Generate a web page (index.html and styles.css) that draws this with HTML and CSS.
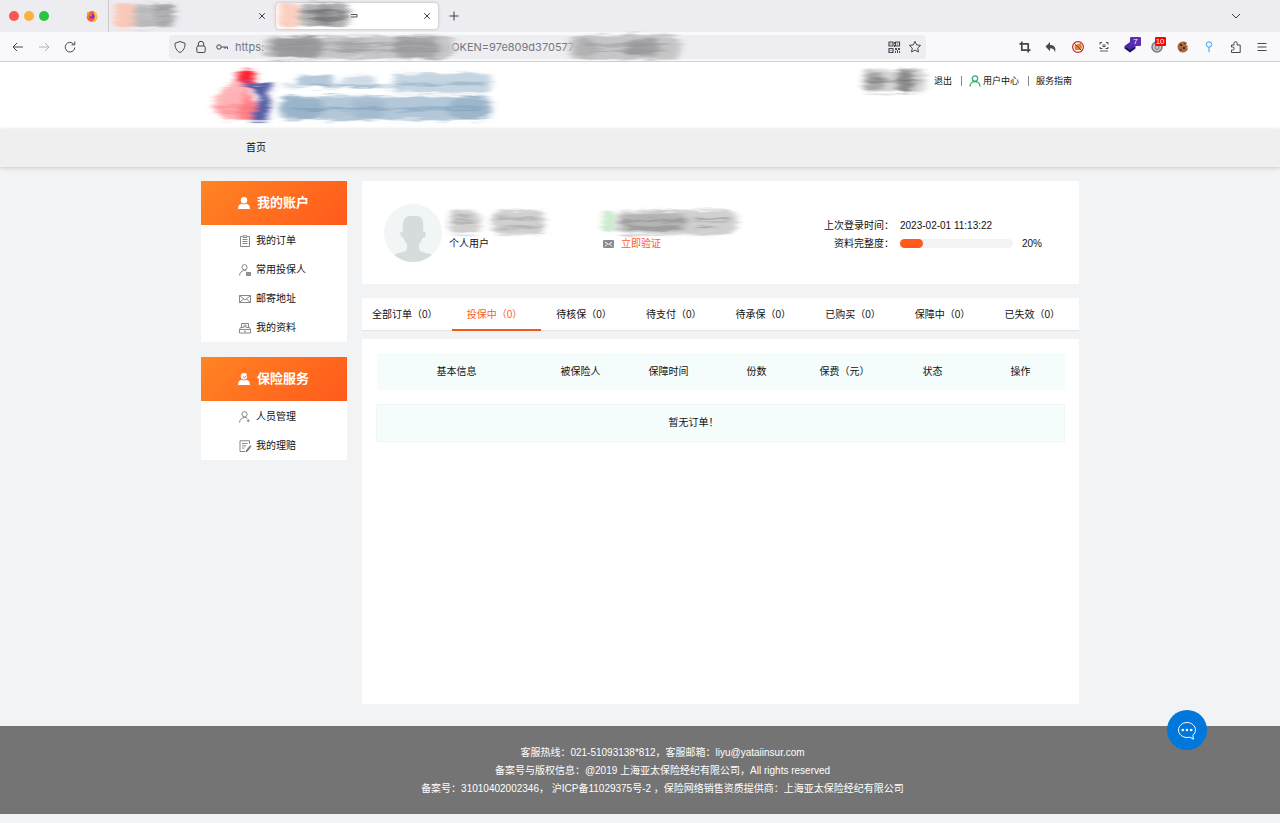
FILE: index.html
```html
<!DOCTYPE html>
<html lang="zh-CN">
<head>
<meta charset="utf-8">
<meta name="viewport" content="width=device-width, initial-scale=1">
<title>用户中心</title>
<link rel="stylesheet" href="styles.css">
</head>
<body>
<svg class="defs" aria-hidden="true">
  <defs>
    <filter id="smear" x="-15%" y="-15%" width="130%" height="130%">
      <feTurbulence type="fractalNoise" baseFrequency="0.04 0.3" numOctaves="2" seed="4" result="n"/>
      <feGaussianBlur in="SourceGraphic" stdDeviation="3 1.2" result="s"/>
      <feDisplacementMap in="s" in2="n" scale="8" xChannelSelector="R" yChannelSelector="G" result="d"/>
      <feGaussianBlur in="d" stdDeviation="1.5 0.4"/>
    </filter>
  </defs>
</svg>

<div class="tabstrip">
  <div class="lights"><i class="light red"></i><i class="light amber"></i><i class="light green"></i></div>
  <svg class="fox" viewBox="0 0 12 12"><circle cx="6" cy="6.400" r="5.300" fill="#ff5a3c"/><path d="M8 1c2.600 1.200 3.800 4 3.100 6.600C10.400 10.200 8 11.700 5.500 11.500 9 10.500 9.500 6 8 4z" fill="#ffc52e"/><path d="M1 4c0-1 .5-2 1-2.500C2.200 2.500 3 3 4 3.200 2.500 4.500 2 6 3 8 1.500 7.500.700 6 1 4z" fill="#ff9a1f"/><circle cx="6" cy="6.300" r="2.500" fill="#7a35d8"/><path d="M3.500 4.500c1.500-.8 2.500 0 3 .8-1 0-1.500.7-1.300 1.300-1 0-1.800-.9-1.700-2.100z" fill="#ff8b1c"/></svg>
  <div class="tab first">
    <svg class="tab-smudge" viewBox="0 0 84 32"><g filter="url(#smear)"><rect x="5" y="3" width="20" height="25" rx="5" fill="#f9c8b8"/><rect x="25" y="4" width="40" height="24" rx="5" fill="#b9b9bb"/><rect x="45" y="5" width="20" height="18" rx="5" fill="#a2a2a4"/><path d="M20 14h42M24 19h36" stroke="#d4d4d6" stroke-width="1"/></g></svg>
    <button class="icon-btn" aria-label="关闭标签"><svg viewBox="0 0 8 8"><path d="M1.200 1.200l5.600 5.600M6.800 1.200L1.200 6.800"/></svg></button>
  </div>
  <div class="tab active">
    <svg class="tab-smudge" viewBox="0 0 84 32"><g filter="url(#smear)"><rect x="2" y="3" width="21" height="25" rx="4" fill="#fbd0c2"/><rect x="23" y="3" width="51" height="24" rx="9" fill="#b0b0b2"/><rect x="38" y="6" width="20" height="18" rx="6" fill="#8e8e90"/><path d="M28 12q26-4 44 3M30 19q24 3 40-2" stroke="#666668" stroke-width="2" fill="none"/></g><path d="M75 14.500h6v2.500h-6" stroke="#555" fill="none"/></svg>
    <button class="icon-btn" aria-label="关闭标签"><svg viewBox="0 0 8 8"><path d="M1.200 1.200l5.600 5.600M6.800 1.200L1.200 6.800"/></svg></button>
  </div>
  <button class="icon-btn plus" aria-label="新建标签"><svg viewBox="0 0 10 10"><path d="M5 .5v9M.5 5h9"/></svg></button>
  <button class="icon-btn chevron" aria-label="标签列表"><svg viewBox="0 0 10 10"><path d="M1 3l4 4 4-4"/></svg></button>
</div>

<div class="toolbar">
  <div class="nav-tools">
    <button class="tool" aria-label="后退"><svg viewBox="0 0 16 16"><path d="M13 8H3M7 4L3 8l4 4"/></svg></button>
    <button class="tool faded" aria-label="前进"><svg viewBox="0 0 16 16"><path d="M3 8h10M9 4l4 4-4 4"/></svg></button>
    <button class="tool" aria-label="刷新"><svg viewBox="0 0 16 16"><path d="M12.800 8.500A4.800 4.800 0 1 1 11.600 5M12.800 2.500v3.300H9.500"/></svg></button>
  </div>
  <div class="address">
    <svg class="tool" viewBox="0 0 16 16"><path d="M8 2.500l5 1.800c.2 4-1.300 7.500-5 9.200C4.300 11.800 2.800 8.300 3 4.300z"/></svg>
    <svg class="tool" viewBox="0 0 16 16"><rect x="3.800" y="7" width="8.400" height="6.500" rx="1.300"/><path d="M5.300 7V5a2.700 2.700 0 0 1 5.400 0v2"/></svg>
    <svg class="tool" viewBox="0 0 16 16"><circle cx="5" cy="8" r="2.200"/><path d="M7.200 8h6.300v2M11 8v1.800"/></svg>
    <input class="url" type="text" aria-label="网址" value="https:&emsp;&emsp;&emsp;&emsp;&emsp;&emsp;&emsp;&emsp;&emsp;&emsp;&emsp;&emsp;&emsp;&emsp;&emsp;&emsp;&emsp;OKEN=97e809d370577">
    <svg class="url-smudge" viewBox="0 0 440 34"><g filter="url(#smear)"><rect x="16" y="6" width="192" height="23" rx="11" fill="#c6c6c8"/><rect x="24" y="6" width="52" height="22" rx="11" fill="#9c9c9e"/><rect x="92" y="9" width="30" height="16" rx="8" fill="#b2b2b4"/><rect x="146" y="6" width="46" height="22" rx="10" fill="#a6a6a8"/><rect x="322" y="5" width="112" height="25" rx="11" fill="#c6c6c8"/><rect x="328" y="9" width="20" height="18" rx="8" fill="#b2b2b4"/><rect x="378" y="8" width="34" height="18" rx="8" fill="#a4a4a6"/><path d="M28 14h160M24 20h170M340 15h80M345 21h74" stroke="#8f8f91" stroke-width="1.500"/></g></svg>
    <svg class="tool qr" viewBox="0 0 16 16"><path d="M3 3h4v4H3zM9.500 3h4v4h-4zM3 9.500h4v4H3z" stroke-width="1.200"/><path d="M4.500 4.500h1v1h-1zM11 4.500h1v1h-1zM4.500 11h1v1h-1zM9 9h2v2H9zM12 9h2v2h-2zM11 11h1v3h-1zM9 12h1v2H9zM13 12h1v2h-1zM8 3h1v2H8zM8 6h1v2H8z" fill="#4a4a50" stroke="none"/></svg>
    <svg class="tool" viewBox="0 0 16 16"><path d="M8 2.300l1.700 3.600 3.900.5-2.900 2.700.8 3.900L8 11.100 4.500 13l.8-3.900-2.900-2.700 3.900-.5z"/></svg>
  </div>
  <div class="extensions">
    <svg class="tool" viewBox="0 0 16 16"><path d="M4.800 2.500v8.700H13.500M2.500 4.800h8.700V13.500" stroke-width="1.700"/></svg>
    <svg class="tool" viewBox="0 0 16 16"><path d="M7 3v3c4 0 6.500 2.500 5 7.500C11.500 10.500 10 9.300 7 9.300v3L2.500 7.500z" fill="#4a4a55" stroke="none"/></svg>
    <svg class="tool" viewBox="0 0 16 16"><path d="M4.500 7c1-2 2-1 3.500-2l3-1 1 4-1 3H5z" fill="#d98235" stroke="none"/><path d="M4 4l8 8" stroke="#c9252d"/><circle cx="8" cy="8" r="5.400" stroke="#c9252d" stroke-width="1.200"/></svg>
    <svg class="tool" viewBox="0 0 16 16"><path d="M4 5.500V3.500h2M10 3.500h2v2M4 8v1.500h2.500M12 8v1.500H9.500M6.500 6h3M6.500 7.500h3"/><path d="M4 12h8" stroke="#aaa" stroke-width="2"/></svg>
    <span class="badged"><svg class="tool" viewBox="0 0 16 16"><path d="M8 3l5.500 4L8 11 2.500 7z" fill="#4b28b0" stroke="none"/><path d="M2.500 7L8 10.500 13.500 7v2.500l-5.500 4-5.500-4z" fill="#21105e" stroke="none"/></svg><b class="badge violet">7</b></span>
    <span class="badged"><svg class="tool" viewBox="0 0 16 16"><circle cx="8" cy="8" r="5" fill="#ccc" stroke="#777" stroke-width="1.500"/><circle cx="8" cy="8.500" r="2" stroke="#777"/></svg><b class="badge scarlet">10</b></span>
    <svg class="tool" viewBox="0 0 16 16"><path d="M8 2.500c2 0 3 .5 4 1.500l-1 2 2 1-1 2 1 1c-1 2-3 3.500-5 3.500a5.500 5.500 0 0 1 0-11z" fill="#a9673e" stroke="none"/><path d="M5 5h2v2H5zM8 8h2v2H8zM5 10h1.500v1.500H5zM9 4h1v1H9z" fill="#4e2a18" stroke="none"/></svg>
    <svg class="tool" viewBox="0 0 16 16"><g class="blue"><circle cx="8" cy="5.500" r="2.700"/><path d="M8 8.200v5"/></g></svg>
    <svg class="tool" viewBox="0 0 16 16"><path d="M3.500 6H6V4.300a1.600 1.600 0 0 1 3.200 0V6h3v7.500H3.500V11h1.200a1.500 1.500 0 0 0 0-3H3.500z"/></svg>
    <button class="tool" aria-label="菜单"><svg viewBox="0 0 16 16"><path d="M3.500 4.500h9M3.500 8h9M3.500 11.500h9"/></svg></button>
  </div>
</div>

<header class="site-header">
  <div class="wrap header-row">
    <svg class="logo" viewBox="0 0 300 66" role="img" aria-label="公司标志"><g filter="url(#smear)"><path d="M14 38Q22 20 44 20L62 58H24L14 50z" fill="#ffb3b7"/><path d="M46 26l18 32H36z" fill="#ff7f87"/><ellipse cx="45" cy="15" rx="10" ry="9" fill="#fb2030"/><path d="M38 21h34l-5 12 3 10-5 16H49l10-22-8-10z" fill="#525da4"/><path d="M12 45h42M20 50h20" stroke="#f45f6a"/></g><g filter="url(#smear)"><rect x="82" y="21" width="210" height="5" fill="#d5e1eb"/><rect x="96" y="13" width="36" height="12" rx="5" fill="#b5c9da"/><rect x="140" y="14" width="34" height="12" rx="5" fill="#d0dde8"/><rect x="192" y="11" width="98" height="20" rx="6" fill="#c5d5e2"/><rect x="78" y="34" width="213" height="24" rx="9" fill="#b2c7d8"/><rect x="80" y="36" width="42" height="21" rx="9" fill="#9ab4ca"/><rect x="150" y="37" width="34" height="19" rx="8" fill="#a5bcd0"/><rect x="248" y="36" width="42" height="21" rx="9" fill="#9cb6ca"/><path d="M90 47h190" stroke="#6d93b2" stroke-width="1.500"/><path d="M110 24h70M195 22h90" stroke="#7699b5" stroke-width="1.500"/></g></svg>
    <nav class="user-links" aria-label="用户">
      <svg class="name-smudge" viewBox="0 0 76 34"><g filter="url(#smear)"><rect x="8" y="5" width="64" height="24" rx="8" fill="#d6d6d6"/><rect x="10" y="8" width="22" height="18" rx="8" fill="#a8a8a8"/><rect x="42" y="5" width="18" height="24" rx="6" fill="#8c8c8c"/><path d="M14 17h52" stroke="#666"/></g></svg>
      <a href="#">退出</a>
      <a class="divided" href="#"><svg viewBox="0 0 12 12"><circle cx="6" cy="3.600" r="2.700"/><path d="M1 11.500C1 8.500 3.300 6.500 6 6.500s5 2 5 5"/></svg>用户中心</a>
      <a class="divided" href="#">服务指南</a>
    </nav>
  </div>
</header>
<nav class="site-nav" aria-label="主导航"><div class="wrap"><a href="#">首页</a></div></nav>

<main class="wrap content">
  <aside class="sidebar">
    <section class="menu">
      <h2><svg viewBox="0 0 12 12"><circle cx="6" cy="3.200" r="3.200"/><path d="M0 12c0-3.500 2-5 4-5.200q2 1.200 4 0c2 .2 4 1.700 4 5.200z"/></svg>我的账户</h2>
      <ul>
        <li><a href="#"><svg viewBox="0 0 12 12"><path d="M3.500 1.500h-2v10h9v-10h-2M4 .8h4v1.700H4zM3.500 4.500h5M3.500 6.500h5M3.500 8.500h5"/></svg>我的订单</a></li>
        <li><a href="#"><svg viewBox="0 0 12 12"><circle cx="5.500" cy="3.200" r="2.600"/><path d="M.6 11.500C.6 8.500 3 6.500 5.500 6.500c.7 0 1.300.1 1.800.4"/><path d="M7.500 8.500h4v3h-4z" fill="#999"/></svg>常用投保人</a></li>
        <li><a href="#"><svg viewBox="0 0 12 12"><path d="M.5 2.500h11v7H.5zM.5 2.500L6 7l5.500-4.500M.5 9.500l4-3.500M11.500 9.500l-4-3.500"/></svg>邮寄地址</a></li>
        <li><a href="#"><svg viewBox="0 0 12 12"><path d="M2.500 5V1.500h7V5M4.500 5.500H1.500l-1 2v3.500h11V7.500l-1-2h-3M.5 7.500h11M4.500 3.200h3M4.500 5.500v-.8h3v.8M5 9.300h2"/></svg>我的资料</a></li>
      </ul>
    </section>
    <section class="menu">
      <h2><svg viewBox="0 0 12 12"><circle cx="6" cy="3.200" r="3.200"/><path d="M0 12c0-3.500 2-5 4-5.200q2 1.200 4 0c2 .2 4 1.700 4 5.200z"/><path class="tick" d="M5 3.400l1.400 1.300L9.500 2"/></svg>保险服务</h2>
      <ul>
        <li><a href="#"><svg viewBox="0 0 12 12"><circle cx="5.500" cy="3.200" r="2.600"/><path d="M.6 11.500C.6 8.500 3 6.500 5.500 6.500c1.200 0 2 .3 2.800.9M9.200 8.200v3M7.700 9.700h3"/></svg>人员管理</a></li>
        <li><a href="#"><svg viewBox="0 0 12 12"><path d="M10.500 4V.8h-9.500v10.700h5M3 3.500h5.500M3 5.800h4M3 8h2.500"/><path d="M11.500 5.500l-4 5-.5 1.200 1.200-.6 3.800-4.800" stroke="#555"/></svg>我的理赔</a></li>
      </ul>
    </section>
  </aside>

  <div class="main">
    <section class="card profile">
      <svg class="avatar" viewBox="0 0 58 58" role="img" aria-label="头像"><defs><clipPath id="round"><circle cx="29" cy="29" r="29"/></clipPath></defs><circle cx="29" cy="29" r="29" fill="#f2f5f5"/><path clip-path="url(#round)" d="M19 28c-1-10 1-16 7-16h7c6 0 7 6 6 16 3-.5 3 1 2.500 3-.5 2.500-1 3-3 3-1 3-2 5-3.500 6v4c0 3 3 4 7 5s7 2 8 3v7H8v-7c3-2 6-3 9-3.500 4-1 6-2 6-5v-4c-2-1-3-3-3.500-6-2 0-2.500-1-3-3-.5-2 0-3.500 2.500-3z" fill="#d6dbdc"/></svg>
      <div class="who">
        <svg class="field-smudge" viewBox="0 0 110 34"><g filter="url(#smear)"><rect x="7" y="5" width="31" height="24" rx="8" fill="#d0d0d0"/><rect x="50" y="5" width="53" height="25" rx="9" fill="#d0d0d0"/><path d="M12 11h18M10 17h24M56 14h38M60 22h40" stroke="#a0a0a0" stroke-width="2"/></g></svg>
        <p>个人用户</p>
      </div>
      <div class="contact">
        <svg class="field-smudge wide" viewBox="0 0 148 34"><g filter="url(#smear)"><rect x="6" y="7" width="12" height="20" rx="4" fill="#c8eacb"/><rect x="20" y="5" width="121" height="25" rx="10" fill="#d0d0d0"/><rect x="24" y="8" width="65" height="18" rx="8" fill="#b5b5b5"/><path d="M24 16h68M98 14h34M30 23h54M98 23h22" stroke="#8a8a8a" stroke-width="2"/></g></svg>
        <p><svg class="mail" viewBox="0 0 11 8"><rect width="11" height="8" rx="1" fill="#858b8e"/><path d="M2 2l3.500 2.500L9 2M2 6.500L4 4.300M9 6.500L7 4.300" fill="none" stroke="#fff"/></svg><a href="#">立即验证</a></p>
      </div>
      <div class="status">
        <span class="label">上次登录时间：</span><span class="value">2023-02-01 11:13:22</span>
        <label class="label" for="completion">资料完整度：</label><progress id="completion" max="100" value="20">20%</progress><span>20%</span>
      </div>
    </section>

    <nav class="order-tabs" aria-label="订单状态">
      <a href="#">全部订单（0）</a><a class="current" href="#" aria-current="page">投保中（0）</a><a href="#">待核保（0）</a><a href="#">待支付（0）</a><a href="#">待承保（0）</a><a href="#">已购买（0）</a><a href="#">保障中（0）</a><a href="#">已失效（0）</a>
    </nav>

    <section class="card orders">
      <table>
        <thead><tr><th class="info">基本信息</th><th>被保险人</th><th>保障时间</th><th>份数</th><th>保费（元）</th><th>状态</th><th>操作</th></tr></thead>
        <tbody><tr class="spacer"><td colspan="7"></td></tr><tr class="empty"><td colspan="7">暂无订单！</td></tr></tbody>
      </table>
    </section>
  </div>
</main>

<footer class="site-footer">
  <p>客服热线：021-51093138*812，客服邮箱：liyu@yataiinsur.com</p>
  <p>备案号与版权信息：@2019 上海亚太保险经纪有限公司，All rights reserved</p>
  <p>备案号：31010402002346， 沪ICP备11029375号-2 ，保险网络销售资质提供商：上海亚太保险经纪有限公司</p>
</footer>
<button class="chat" aria-label="在线客服"><svg viewBox="0 0 20 20"><path d="M15.800 15.200c1.700-1.300 2.700-3.200 2.700-5.200 0-4-3.700-7.500-8.500-7.500S1.500 6 1.500 10s3.700 7.500 8.500 7.500c1 0 2-.1 2.900-.4l3.600 2.200z"/><g class="dots"><circle cx="5.800" cy="10" r="1.300"/><circle cx="10" cy="10" r="1.300"/><circle cx="14.200" cy="10" r="1.300"/></g></svg></button>
</body>
</html>
```
FILE: styles.css
```css
* { box-sizing: border-box; }

body {
  margin: 0;
  min-height: 100vh;
  display: flex;
  flex-direction: column;
  background: #f2f3f5;
  color: #111;
  font: 10px/18px "Liberation Sans", "Noto Sans CJK SC", sans-serif;
}

p, h2, ul { margin: 0; padding: 0; }
ul { list-style: none; }
a { color: inherit; text-decoration: none; }
button { padding: 0; border: 0; background: none; }
svg { display: block; flex: none; overflow: visible; }
.defs { position: absolute; width: 0; height: 0; }

.wrap {
  width: 100%;
  max-width: 878px;
  margin: 0 auto;
}

/* Window chrome */
.tabstrip {
  display: flex;
  align-items: center;
  height: 32px;
  padding: 0 39px 0 9px;
  background: #edecf1;
}
.lights { display: flex; gap: 5px; }
.light { width: 10px; height: 10px; border-radius: 50%; }
.red { background: #fc5650; }
.amber { background: #fdb13a; }
.green { background: #2bc440; }
.fox { width: 12px; height: 12px; margin: 0 10px 0 37px; }
.tab {
  display: flex;
  align-items: center;
  justify-content: space-between;
  width: 162px;
  height: 26px;
  padding-right: 7px;
}
.tab.first {
  width: 168px;
  height: 32px;
  padding-right: 10px;
  border-left: 1px solid #c9c8cd;
}
.tab.active {
  border-radius: 4px;
  background: #fff;
  box-shadow: 0 0 3px #aaa;
}
.tab-smudge { width: 84px; height: 32px; }
.icon-btn svg { width: 8px; height: 8px; fill: none; stroke: #3d3d46; }
.icon-btn.plus { margin-left: 11px; }
.icon-btn.plus svg, .icon-btn.chevron svg { width: 10px; height: 10px; }
.icon-btn.chevron { margin-left: auto; }

.toolbar {
  display: flex;
  align-items: center;
  height: 30px;
  padding: 0 10px;
  border-bottom: 1px solid #d0d0d4;
  background: #f9f9fb;
}
.tool, .tool svg {
  width: 16px;
  height: 16px;
  flex: none;
  fill: none;
  stroke: #45454e;
  stroke-linejoin: round;
}
.faded { opacity: 0.4; }
.nav-tools { display: flex; gap: 10px; }
.address {
  position: relative;
  flex: 1;
  display: flex;
  align-items: center;
  gap: 5px;
  height: 24px;
  margin: 0 91px;
  padding: 0 3px;
  border-radius: 4px;
  background: #eeedf2;
}
.url {
  flex: 1;
  min-width: 0;
  padding: 0;
  border: 0;
  background: none;
  color: #77777d;
  font: 11px/16px Inter, sans-serif;
}
.url-smudge {
  position: absolute;
  left: 78px;
  top: -5px;
  width: 440px;
  height: 34px;
}
.extensions {
  display: flex;
  justify-content: space-between;
  width: 253px;
}
.badged { position: relative; }
.badge {
  position: absolute;
  left: 8px;
  top: -2px;
  padding: 0 3px;
  border-radius: 1px;
  color: #fff;
  font: 8px/9px "Liberation Sans", sans-serif;
}
.violet { background: #5b2fb5; }
.scarlet { left: 6px; padding: 0 1px; background: #f00; }
.blue { stroke: #3d9bf0; }

/* Site header */
.site-header { background: #fff; }
.header-row {
  display: flex;
  justify-content: space-between;
  align-items: flex-start;
  height: 67px;
}
.logo { width: 300px; height: 66px; }
.user-links {
  display: flex;
  align-items: center;
  padding: 10px 7px 0 0;
  font-size: 9px;
  line-height: 18px;
}
.user-links a { display: flex; align-items: center; }
.user-links svg { width: 12px; height: 12px; margin-right: 2px; fill: none; stroke: #2fae64; stroke-width: 1.3; }
.user-links .name-smudge { width: 76px; height: 34px; margin: -8px 4px -8px 0; stroke: none; }
.divided::before {
  content: "";
  width: 1px;
  height: 10px;
  margin: 0 7px 0 9px;
  background: #888;
}
.site-nav {
  height: 38px;
  background: #efefef;
  box-shadow: 0 1px 4px #c8c8c8;
  line-height: 38px;
}
.site-nav a { padding-left: 45px; }

/* Page content */
.content {
  flex: 1;
  display: flex;
  gap: 15px;
  padding: 14px 0 22px;
}
.sidebar {
  display: flex;
  flex-direction: column;
  gap: 15px;
  width: 146px;
}
.menu { background: #fff; }
.menu h2 {
  display: flex;
  align-items: center;
  gap: 7px;
  height: 44px;
  padding-left: 37px;
  background: linear-gradient(135deg, #ff8423, #ff5a1c);
  color: #fff;
  font-size: 13px;
  font-weight: 700;
}
.menu h2 svg { width: 12px; height: 12px; fill: #fff; }
.menu .tick { fill: none; stroke: #ff6d20; }
.menu ul { padding-top: 1px; }
.menu li a {
  display: flex;
  align-items: center;
  gap: 5px;
  height: 29px;
  padding-left: 38px;
}
.menu li svg { width: 12px; height: 12px; fill: none; stroke: #888; }

.main {
  flex: 1;
  display: flex;
  flex-direction: column;
}
.card { background: #fff; }
.profile {
  display: flex;
  align-items: center;
  height: 103px;
  padding: 0 36px 0 22px;
}
.avatar { width: 58px; height: 58px; }
.who, .contact, .status { margin-top: 4px; }
.who { width: 154px; margin-left: 7px; }
.field-smudge { width: 110px; height: 34px; margin: -12px 0 -4px -7px; }
.field-smudge.wide { width: 148px; }
.mail { width: 11px; height: 8px; }
.contact p { display: flex; align-items: center; gap: 7px; }
.contact a { color: #ff5a1c; }
.status {
  display: grid;
  grid-template-columns: 72px 113px 21px;
  column-gap: 9px;
  align-items: center;
  margin-left: auto;
}
.label { text-align: right; margin-right: -3px; }
.value { grid-column: span 2; }
progress {
  appearance: none;
  display: block;
  width: 113px;
  height: 9px;
  border: 0;
}
progress::-webkit-progress-bar { border-radius: 5px; background: #f2f3f5; }
progress::-webkit-progress-value { border-radius: 5px; background: #ff5a1c; }

.order-tabs {
  display: flex;
  margin: 14px 0 8px;
  background: #fff;
}
.order-tabs a {
  flex: 1;
  height: 33px;
  padding-right: 4px;
  border-bottom: 1px solid #e4e5e6;
  line-height: 34px;
  text-align: center;
  white-space: nowrap;
}
.order-tabs .current { border-bottom: 2px solid #f4571c; color: #ff5a1c; }

.orders { flex: 1; padding: 14px; }
table {
  width: 100%;
  border-collapse: collapse;
  table-layout: fixed;
}
th, .empty td {
  height: 37px;
  padding: 0;
  background: #f5fcfc;
  font-weight: 400;
  text-align: center;
}
.info { width: 160px; }
.spacer td { height: 14px; padding: 0; }
.empty td { padding-right: 54px; border: 1px solid #eef6f6; }

.site-footer {
  margin-bottom: 9px;
  padding: 18px 0 16px 45px;
  background: #747474;
  color: #fff;
  text-align: center;
}

.chat {
  position: fixed;
  right: 73px;
  bottom: 73px;
  width: 40px;
  height: 40px;
  border-radius: 50%;
  background: #0078db;
}
.chat svg { width: 20px; height: 20px; margin: 0 auto; fill: none; stroke: #fff; }
.chat .dots { fill: #fff; stroke: none; }
```
